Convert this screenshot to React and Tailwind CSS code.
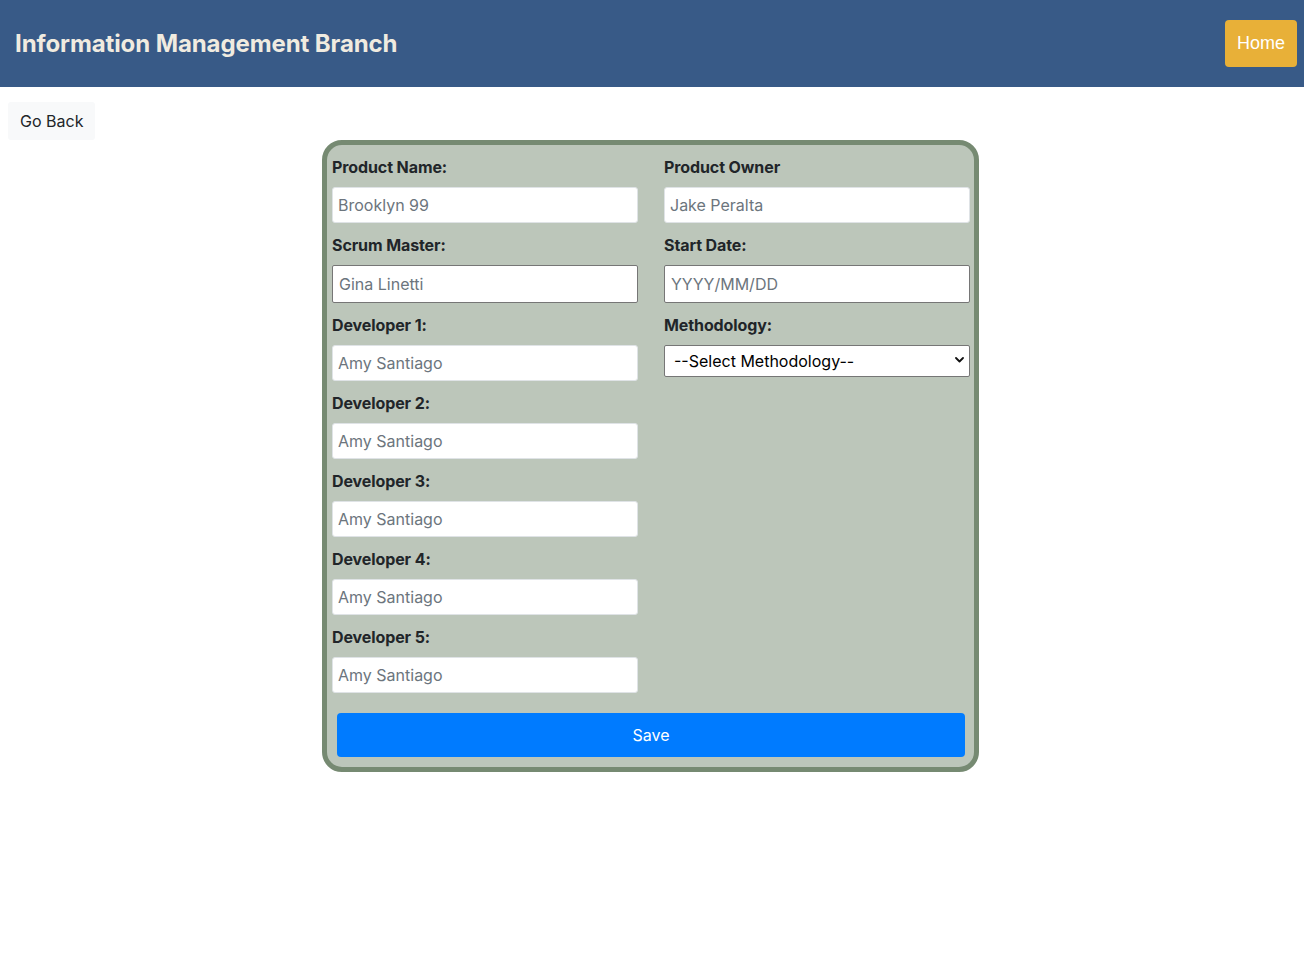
import React from 'react';

const devs = ['Developer 1:', 'Developer 2:', 'Developer 3:', 'Developer 4:', 'Developer 5:'];

function Field({ label, placeholder, dark }) {
  return (
    <div className="flex flex-col">
      <label className="text-[16px] leading-6 font-bold text-[#212529] mb-2 tracking-[-0.1px]">{label}</label>
      <input
        type="text"
        placeholder={placeholder}
        className={
          'w-full bg-white text-[16px] text-[#495057] placeholder:text-[#6c757d] outline-none mb-2.5 ' +
          (dark
            ? 'h-[38px] px-[6px] border border-[#767676] rounded-[2px]'
            : 'h-[36px] px-[5px] border border-[#dfe3e6] rounded-[3px]')
        }
      />
    </div>
  );
}

export default function App() {
  return (
    <div className="min-h-screen bg-white" style={{ fontFamily: 'Inter, "Noto Sans", sans-serif' }}>
      {/* Header */}
      <header className="h-[87px] bg-[#385a87] flex items-center justify-between pl-[15px] pr-[7px]">
        <h1 className="text-[24px] font-bold text-[#f0ebe0] tracking-[-0.1px]">Information Management Branch</h1>
        <button className="h-[47px] px-3 bg-[#e8b038] text-white text-[18px] rounded-[4px]" style={{ fontFamily: '"Liberation Sans", Arial, sans-serif' }}>
          Home
        </button>
      </header>

      <button className="ml-2 mt-[15px] h-[38px] px-3 bg-[#f8f9fa] rounded-[3px] text-[16px] text-[#212529]">
        Go Back
      </button>

      {/* Form card */}
      <div className="w-[657px] ml-[calc(50%-330px)] bg-[#bcc6ba] border-[5px] border-[#768a72] rounded-[20px] pl-[5px] pr-[4px] pt-[10px] pb-[10px]">
        <div className="grid grid-cols-2 gap-x-[26px]">
          <div className="flex flex-col">
            <Field label="Product Name:" placeholder="Brooklyn 99" />
            <Field label="Scrum Master:" placeholder="Gina Linetti" dark />
            {devs.map((d) => (
              <Field key={d} label={d} placeholder="Amy Santiago" />
            ))}
          </div>
          <div className="flex flex-col">
            <Field label="Product Owner" placeholder="Jake Peralta" />
            <Field label="Start Date:" placeholder="YYYY/MM/DD" dark />
            <div className="flex flex-col">
              <label className="text-[16px] leading-6 font-bold text-[#212529] mb-2 tracking-[-0.1px]">Methodology:</label>
              <div className="relative">
                <select className="appearance-none w-full h-[32px] bg-white border border-[#767676] rounded-[2px] pl-[9px] pr-6 text-[16px] text-black outline-none">
                  <option>--Select Methodology--</option>
                  <option>Agile</option>
                  <option>Waterfall</option>
                </select>
                <svg className="absolute right-[6px] top-[12px] pointer-events-none" width="9" height="6" viewBox="0 0 9 6">
                  <path d="M1 1l3.5 3.5L8 1" fill="none" stroke="#111" strokeWidth="1.8" strokeLinecap="round" strokeLinejoin="round" />
                </svg>
              </div>
            </div>
          </div>
        </div>
        <div className="pl-[5px] pr-[5px] mt-[10px]">
          <button className="w-full h-[44px] bg-[#007bff] text-white text-[16px] rounded-[4px]">Save</button>
        </div>
      </div>
    </div>
  );
}
